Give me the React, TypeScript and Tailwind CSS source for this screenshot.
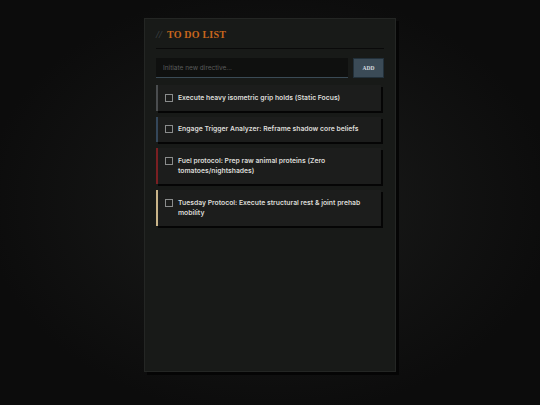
import React from "react";

const tasks = [
  { text: "Execute heavy isometric grip holds (Static Focus)", bar: "border-l-[#4a4d4f]" },
  { text: "Engage Trigger Analyzer: Reframe shadow core beliefs", bar: "border-l-[#34475a]" },
  { text: "Fuel protocol: Prep raw animal proteins (Zero tomatoes/nightshades)", bar: "border-l-[#7a1f22]" },
  { text: "Tuesday Protocol: Execute structural rest & joint prehab mobility", bar: "border-l-[#c8b489]" },
];

export default function App() {
  return (
    <div className="flex min-h-screen items-start justify-center bg-[radial-gradient(ellipse_at_center,#1b1c1b_0%,#0c0c0c_75%)] pt-[18px] font-['Inter',sans-serif]">
      <div className="flex h-[354px] w-[252px] flex-col border border-[#242624] bg-[#181a18] px-[11px] pt-[8px] shadow-[3px_3px_0_#050505]">
        <h1 className="flex items-baseline gap-[5px] border-b border-[#0a0a0a] pb-[6px] font-['Liberation_Serif',serif] text-[10px] font-bold tracking-[0.2px] text-[#c7661d]">
          <span className="font-normal italic text-[#4a4f52]">//</span>
          <span>TO DO LIST</span>
        </h1>
        <div className="mt-[9px] flex gap-[5px]">
          <input
            placeholder="Initiate new directive..."
            className="h-[20px] flex-1 border-b border-[#3a4a55] bg-[#0f100f] px-[7px] text-[6.5px] text-[#cccccc] outline-none placeholder:text-[#5a5c5c]"
          />
          <button className="h-[20px] w-[31px] border border-[#22303a] bg-[#3b4b57] font-['Liberation_Serif',serif] text-[5.5px] font-bold text-[#d8dde0]">
            ADD
          </button>
        </div>
        <ul className="mt-[7px] flex flex-col gap-[6px] pr-[3px]">
          {tasks.map((t) => (
            <li
              key={t.text}
              className={`flex items-start gap-[5px] border-l-2 ${t.bar} bg-[#1c1d1c] py-[7.5px] pl-[7px] pr-[6px] shadow-[2px_2px_0_#050505]`}
            >
              <span className="mt-[1px] h-[8px] w-[8px] shrink-0 border border-[#8a8c8c]" />
              <span className="text-[6.8px] font-semibold leading-[10.5px] text-[#dcdcd8]">{t.text}</span>
            </li>
          ))}
        </ul>
      </div>
    </div>
  );
}
